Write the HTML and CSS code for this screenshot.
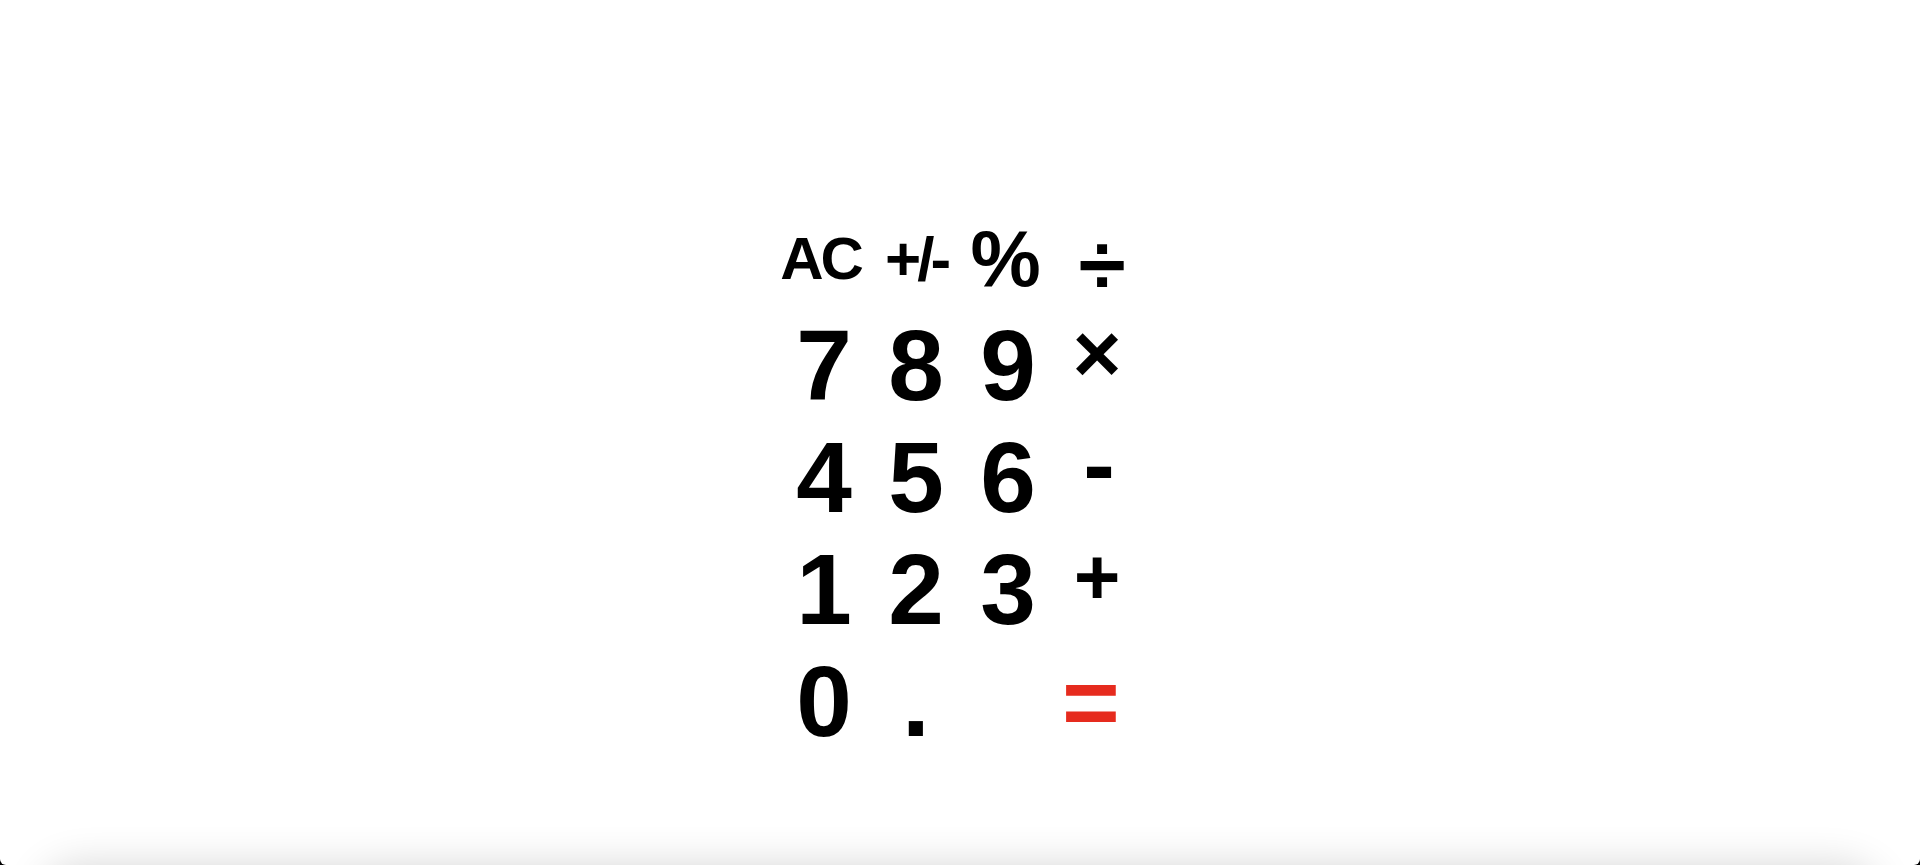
FILE: index.html
```html
<!DOCTYPE html>
<html lang="en">
<head>
<meta charset="utf-8">
<title>Calculator</title>
<link rel="stylesheet" href="styles.css">
</head>
<body>
<main class="panel">
  <div class="pad-wrap">
    <div class="keypad">
      <button class="key fn fn-ac">AC</button>
      <button class="key fn fn-sign">+/-</button>
      <button class="key fn fn-pct">%</button>
      <button class="key op op-div">÷</button>

      <button class="key num">7</button>
      <button class="key num">8</button>
      <button class="key num">9</button>
      <button class="key op op-mul">×</button>

      <button class="key num">4</button>
      <button class="key num">5</button>
      <button class="key num">6</button>
      <button class="key op op-sub">-</button>

      <button class="key num">1</button>
      <button class="key num">2</button>
      <button class="key num">3</button>
      <button class="key op op-add">+</button>

      <button class="key num">0</button>
      <button class="key num">.</button>
      <span class="key empty"></span>
      <button class="key op op-eq">=</button>
    </div>
  </div>
  <div class="bottom-shadow"></div>
</main>
</body>
</html>
```
FILE: styles.css
```css
html, body {
  margin: 0;
  padding: 0;
  height: 100%;
}

body {
  background: #000;
  font-family: "Liberation Sans", Arial, sans-serif;
  overflow: hidden;
}

.panel {
  position: relative;
  height: 865px;
  background: #fff;
  border-radius: 0 0 6px 6px;
  overflow: hidden;
}

.pad-wrap {
  display: flex;
  justify-content: center;
  padding-top: 208px;
  padding-left: 4px;
}

.keypad {
  display: grid;
  grid-template-columns: repeat(4, 92px);
  grid-template-rows: 101px repeat(4, 112px);
}

.key {
  display: flex;
  align-items: center;
  justify-content: center;
  margin: 0;
  padding: 0;
  border: 0;
  background: none;
  color: #000;
  font-family: "Liberation Sans", Arial, sans-serif;
  font-weight: 700;
  line-height: 1;
  white-space: nowrap;
  cursor: pointer;
}

.num {
  font-size: 100px;
}

.fn-ac {
  font-size: 60px;
  letter-spacing: -3px;
  margin-right: 7px;
}

.fn-sign {
  font-size: 62px;
  letter-spacing: -4px;
}

.fn-pct {
  font-size: 79px;
  margin-right: 5px;
}

.op-div {
  font-size: 86px;
  margin-top: 11px;
  margin-left: 4px;
}

.op-mul {
  font-size: 84px;
  margin-bottom: 24px;
  margin-right: 6px;
}

.op-sub {
  font-size: 95px;
  margin-bottom: 26px;
  margin-right: 2px;
}

.op-add {
  font-size: 80px;
  margin-bottom: 24px;
  margin-right: 6px;
}

.op-eq {
  font-size: 99px;
  color: #e62b1e;
  margin-right: 18px;
}

.bottom-shadow {
  position: absolute;
  left: 40px;
  right: 40px;
  top: 865px;
  height: 100px;
  border-radius: 40px;
  box-shadow: 0 0 40px rgba(0, 0, 0, 0.16);
}
```
